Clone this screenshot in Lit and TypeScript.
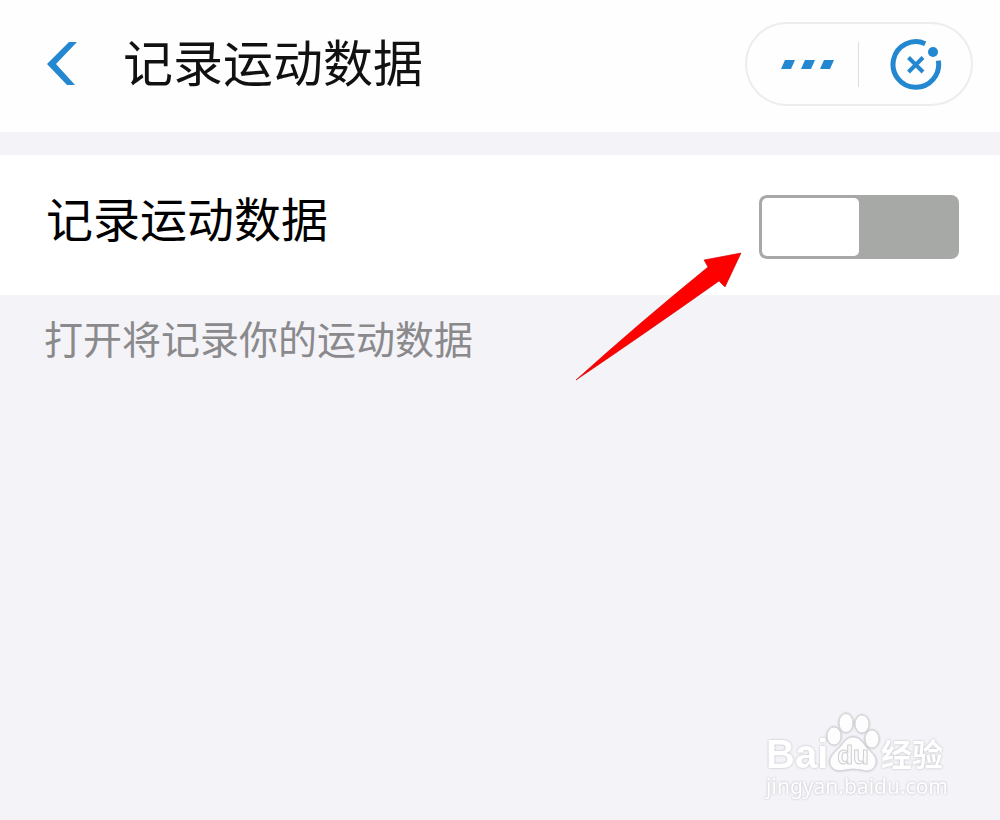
import { LitElement, html, css } from "lit";
import { customElement, state } from "lit/decorators.js";

@customElement("app-header")
class AppHeader extends LitElement {
  static styles = css`
    :host {
      display: block;
      background: #fefefe;
    }
    .bar {
      display: flex;
      align-items: center;
      box-sizing: border-box;
      min-height: 132px;
      padding: 0 27px 4px 40px;
    }
    button {
      display: flex;
      align-items: center;
      justify-content: center;
      padding: 0;
      border: 0;
      background: none;
      cursor: pointer;
    }
    svg {
      display: block;
    }
    .back {
      width: 44px;
      height: 60px;
      margin-right: 39px;
    }
    h1 {
      flex: 1;
      margin: 0;
      padding-bottom: 8px;
      font-size: 50px;
      line-height: 72px;
      font-weight: 400;
      color: #111;
    }
    .capsule {
      display: flex;
      align-items: center;
      box-sizing: border-box;
      width: 228px;
      height: 84px;
      border: 2px solid #ededed;
      border-radius: 42px;
    }
    .capsule button {
      box-sizing: border-box;
      width: 111px;
      height: 80px;
      padding-top: 2px;
    }
    .capsule .more {
      padding-left: 10px;
    }
    .divider {
      width: 1px;
      height: 45px;
      background: #dedede;
    }
    .capsule .close {
      padding-left: 2px;
    }
  `;

  render() {
    return html`
      <header class="bar">
        <button class="back" aria-label="返回">
          <svg width="44" height="44" viewBox="0 0 44 44">
            <path d="M29 0H37L16 22L35 43H27L7 22Z" fill="#2488d0" />
          </svg>
        </button>
        <h1>记录运动数据</h1>
        <div class="capsule">
          <button class="more" aria-label="更多">
            <svg width="54" height="10" viewBox="0 0 54 10" fill="#2488d0">
              <path d="M4 0H14L10 9H0ZM24 0H34L30 9H20ZM43 0H53L49 9H39Z" />
            </svg>
          </button>
          <span class="divider"></span>
          <button class="close" aria-label="关闭">
            <svg width="52" height="52" viewBox="0 0 52 52" fill="none" stroke="#2488d0">
              <path d="M35.2 4.7A22.8 22.8 0 1 0 48.3 21.6" stroke-width="5" />
              <path d="M18.5 18.5L33 33M33 18.5L18.5 33" stroke-width="4" />
              <circle cx="43" cy="13" r="5" fill="#2488d0" stroke="none" />
            </svg>
          </button>
        </div>
      </header>
    `;
  }
}

@customElement("setting-row")
class SettingRow extends LitElement {
  @state() private on = false;

  static styles = css`
    .row {
      display: flex;
      align-items: center;
      justify-content: space-between;
      box-sizing: border-box;
      min-height: 140px;
      padding: 0 41px 0 46px;
      background: #fff;
    }
    label {
      padding-bottom: 16px;
      font-size: 47px;
      line-height: 68px;
      color: #000;
    }
    .switch {
      appearance: none;
      display: flex;
      box-sizing: border-box;
      width: 200px;
      height: 64px;
      margin: 0 0 -4px;
      padding: 3px;
      border-radius: 8px;
      background: #a7a9a6;
      cursor: pointer;
    }
    .switch::before {
      content: "";
      width: 97px;
      height: 58px;
      border-radius: 5px;
      background: #fff;
    }
    .switch:checked {
      justify-content: flex-end;
      background: #2488d0;
    }
    p {
      margin: 0;
      padding: 14px 44px;
      font-size: 39px;
      line-height: 56px;
      color: #8a8a8c;
    }
  `;

  render() {
    return html`
      <div class="row">
        <label for="record">记录运动数据</label>
        <input
          id="record"
          class="switch"
          type="checkbox"
          role="switch"
          aria-describedby="hint"
          .checked=${this.on}
          @change=${(e: Event) => (this.on = (e.target as HTMLInputElement).checked)}
        />
      </div>
      <p id="hint">打开将记录你的运动数据</p>
    `;
  }
}

@customElement("site-mark")
class SiteMark extends LitElement {
  static styles = css`
    :host {
      display: block;
      color: #fff;
      font-family: "Liberation Sans", "Noto Sans CJK SC", sans-serif;
      filter: drop-shadow(0 0 1px #b8b8be);
    }
    .brand {
      display: flex;
      align-items: flex-end;
      height: 60px;
      font-weight: 700;
    }
    .latin {
      width: 60px;
      font-size: 40px;
      line-height: 36px;
    }
    .paw {
      position: relative;
      width: 54px;
      height: 60px;
      margin-right: 1px;
    }
    .paw svg {
      display: block;
    }
    .du {
      position: absolute;
      inset: 29px 0 auto;
      text-align: center;
      font-size: 26px;
      line-height: 28px;
      color: #fbfbfc;
      -webkit-text-stroke: 1px #cfcfd4;
    }
    .cjk {
      font-size: 31px;
      line-height: 33px;
    }
    .url {
      font-family: "Noto Sans", sans-serif;
      font-size: 21px;
      line-height: 28px;
    }
  `;

  render() {
    return html`
      <div class="brand">
        <span class="latin">Bai</span>
        <span class="paw">
          <svg width="54" height="60" viewBox="0 0 54 60" fill="#fdfdfe" stroke="#d5d5d9">
            <ellipse cx="8" cy="24" rx="7" ry="9" />
            <ellipse cx="20" cy="11" rx="7" ry="9.5" />
            <ellipse cx="36" cy="12" rx="7" ry="9" />
            <ellipse cx="46" cy="27" rx="7" ry="9" />
            <path
              d="M27 25C34 25 37 31 41 36C46 41 51 45 50 51C48 59 42 60 36 58Q27 56 19 58C12 60 6 58 4 52C3 45 8 41 13 36C18 31 20 25 27 25Z"
            />
          </svg>
          <span class="du">du</span>
        </span>
        <span class="cjk">经验</span>
      </div>
      <div class="url">jingyan.baidu.com</div>
    `;
  }
}

@customElement("app-root")
class AppRoot extends LitElement {
  static styles = css`
    :host {
      display: block;
      position: relative;
      box-sizing: border-box;
      min-height: 100vh;
      background: #f4f3f8;
      font-family: "Noto Sans CJK SC", sans-serif;
    }
    main {
      padding-top: 23px;
    }
    .arrow {
      position: absolute;
      top: 252px;
      right: 258px;
      pointer-events: none;
    }
    .mark {
      position: absolute;
      right: 52px;
      bottom: 20px;
    }
  `;

  render() {
    return html`
      <app-header></app-header>
      <main>
        <setting-row></setting-row>
      </main>
      <svg class="arrow" width="166" height="129" viewBox="0 0 166 129" aria-hidden="true">
        <path
          d="M165 1L128 8L132 15Q62 72 0 128Q68 82 143 29L149 35Z"
          fill="#f00"
          stroke="#c00"
          stroke-width="0.6"
        />
      </svg>
      <site-mark class="mark"></site-mark>
    `;
  }
}
